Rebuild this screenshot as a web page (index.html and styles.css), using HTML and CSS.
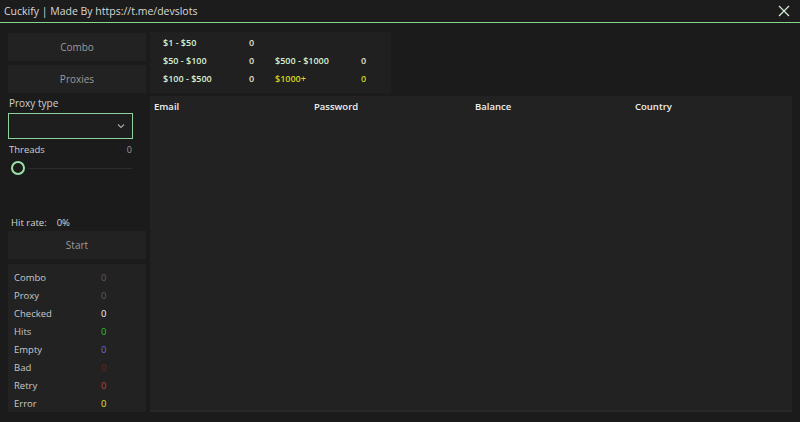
FILE: index.html
```html
<!DOCTYPE html>
<html lang="en">
<head>
  <meta charset="UTF-8">
  <title>Cuckify</title>
  <link rel="stylesheet" href="styles.css">
</head>
<body>
  <!-- title bar -->
  <div class="titlebar">
    <span class="app-title">Cuckify | Made By https://t.me/devslots</span>
    <svg class="close" width="12" height="12" viewBox="0 0 12 12">
      <path d="M1 1L11 11M11 1L1 11" stroke="#cfe8d4" stroke-width="1.3" fill="none"/>
    </svg>
  </div>

  <div class="main">
    <!-- left column -->
    <div class="side">
      <div class="btn">Combo</div>
      <div class="btn btn-2">Proxies</div>
      <p class="label">Proxy type</p>
      <div class="select">
        <svg width="8" height="6" viewBox="0 0 8 6"><path d="M1 1.5L4 4.5L7 1.5" stroke="#aaa" stroke-width="1.1" fill="none"/></svg>
      </div>
      <div class="threads">
        <span>Threads</span><span class="muted">0</span>
      </div>
      <div class="slider">
        <span class="knob"></span>
        <span class="track"></span>
      </div>
      <div class="hitrate"><span>Hit rate:</span><span>0%</span></div>
      <div class="btn">Start</div>
      <div class="stats">
        <div class="stat"><span>Combo</span><span class="v-gray">0</span></div>
        <div class="stat"><span>Proxy</span><span class="v-gray">0</span></div>
        <div class="stat"><span>Checked</span><span class="v-white">0</span></div>
        <div class="stat"><span>Hits</span><span class="v-green">0</span></div>
        <div class="stat"><span>Empty</span><span class="v-purple">0</span></div>
        <div class="stat"><span>Bad</span><span class="v-darkred">0</span></div>
        <div class="stat"><span>Retry</span><span class="v-red">0</span></div>
        <div class="stat"><span>Error</span><span class="v-yellow">0</span></div>
      </div>
    </div>

    <!-- right column -->
    <div class="content">
      <div class="ranges">
        <span class="r-label">$1 - $50</span><span class="r-val">0</span><span></span><span></span>
        <span class="r-label">$50 - $100</span><span class="r-val">0</span><span class="r-label">$500 - $1000</span><span class="r-val">0</span>
        <span class="r-label">$100 - $500</span><span class="r-val">0</span><span class="r-label gold">$1000+</span><span class="r-val gold">0</span>
      </div>
      <div class="table">
        <div class="thead">
          <span>Email</span><span>Password</span><span>Balance</span><span>Country</span>
        </div>
      </div>
    </div>
  </div>
</body>
</html>
```

FILE: styles.css
```css
* {
  box-sizing: border-box;
  margin: 0;
}
body {
  background: #1b1b1b;
  color: #d6d6d6;
  font-family: "Open Sans", "Noto Sans", sans-serif;
  font-size: 10px;
  width: 800px;
  height: 422px;
  overflow: hidden;
}
/* title bar */
.titlebar {
  height: 23px;
  display: flex;
  align-items: center;
  justify-content: space-between;
  padding: 0 10px 0 4px;
  background: #1c1c1c;
  border-bottom: 1px solid #86d98a;
}
.app-title {
  font-size: 10.5px;
  color: #d8d8d8;
  margin-top: -1px;
}
.close {
  margin-top: -1px;
}
.main {
  display: flex;
  gap: 4px;
  padding: 10px 8px 10px 8px;
  height: 399px;
}
/* left column */
.side {
  width: 138px;
  display: flex;
  flex-direction: column;
}
.btn {
  height: 28px;
  flex-shrink: 0;
  background: #222222;
  color: #9a9a9a;
  display: flex;
  align-items: center;
  justify-content: center;
  font-size: 10px;
}
.btn-2 {
  margin-top: 4px;
}
.label {
  margin-top: 2px;
  padding-left: 1px;
  font-size: 10px;
  color: #cfcfcf;
  line-height: 16px;
}
.select {
  width: 125px;
  height: 26px;
  flex-shrink: 0;
  margin-top: 2px;
  border: 1px solid #8fd39c;
  background: #1e1e1e;
  display: flex;
  align-items: center;
  justify-content: flex-end;
  padding-right: 7px;
}
.threads {
  display: flex;
  justify-content: space-between;
  width: 124px;
  padding-left: 1px;
  margin-top: 3px;
  line-height: 16px;
  font-size: 9.5px;
  color: #cfcfcf;
}
.muted {
  color: #9a9a9a;
  font-size: 9px;
}
.slider {
  display: flex;
  align-items: center;
  height: 20px;
  margin-top: 1px;
  padding-left: 3px;
}
.knob {
  width: 14px;
  height: 14px;
  border: 2.5px solid #9be3a8;
  border-radius: 50%;
}
.track {
  width: 104px;
  height: 1px;
  background: #2c2c2c;
  margin-left: 3px;
}
.hitrate {
  display: flex;
  gap: 10px;
  margin-top: 38px;
  padding-left: 3px;
  line-height: 16px;
  font-size: 9.5px;
  color: #d6d6d6;
}
.stats {
  margin-top: 5px;
  flex: 1;
  background: #222222;
  padding: 4px 0 0 6px;
}
.stat {
  display: flex;
  height: 18px;
  align-items: center;
  font-size: 9.5px;
  color: #c8c8c8;
}
.stat span:first-child {
  width: 87px;
}
.v-gray { color: #5c5c5c; }
.v-white { color: #f2f2f2; }
.v-green { color: #29c02c; }
.v-purple { color: #6f6ad8; }
.v-darkred { color: #6e2424; }
.v-red { color: #b54848; }
.v-yellow { color: #e3e02a; }
/* right column */
.content {
  flex: 1;
  display: flex;
  flex-direction: column;
  gap: 3px;
  margin-top: -1px;
}
.ranges {
  width: 241px;
  height: 61px;
  background: #202020;
  display: grid;
  grid-template-columns: 86px 26px 86px 30px;
  grid-auto-rows: 18px;
  align-content: center;
  padding-left: 13px;
  padding-top: 1px;
  font-size: 9px;
  font-weight: 600;
}
.r-label {
  color: #d6f2d6;
}
.r-val {
  color: #e8e0c4;
}
.gold {
  color: #d7d319;
}
.table {
  flex: 1;
  background: #222222;
  border-bottom: 2px solid #282828;
}
.thead {
  display: grid;
  grid-template-columns: 160px 161px 160px 1fr;
  padding: 4px 0 0 4px;
  color: #f0f0f0;
  font-size: 9.5px;
  font-weight: 600;
  line-height: 14px;
}
```
